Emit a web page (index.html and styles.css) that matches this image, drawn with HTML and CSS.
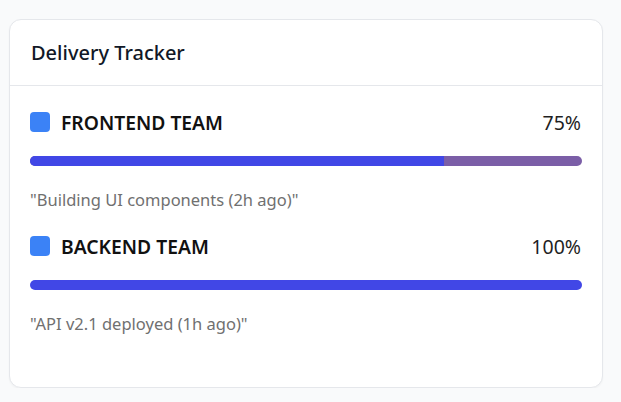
FILE: index.html
```html
<!DOCTYPE html>
<html lang="en">
<head>
<meta charset="utf-8">
<title>Delivery Tracker</title>
<link rel="stylesheet" href="styles.css">
</head>
<body>
<div class="card">
  <div class="card-header">
    <h2 class="title">Delivery Tracker</h2>
  </div>
  <div class="card-body">
    <div class="team">
      <div class="team-row">
        <div class="team-name"><span class="swatch"></span><span>FRONTEND TEAM</span></div>
        <span class="pct">75%</span>
      </div>
      <div class="track"><div class="fill" style="width:75%"></div></div>
      <p class="note">"Building UI components (2h ago)"</p>
    </div>
    <div class="team">
      <div class="team-row">
        <div class="team-name"><span class="swatch"></span><span>BACKEND TEAM</span></div>
        <span class="pct">100%</span>
      </div>
      <div class="track"><div class="fill" style="width:100%"></div></div>
      <p class="note">"API v2.1 deployed (1h ago)"</p>
    </div>
  </div>
</div>
</body>
</html>
```

FILE: styles.css
```css
* { box-sizing: border-box; }
html, body { margin: 0; padding: 0; }
body {
  background: #f9fafb;
  font-family: "Noto Sans", "Open Sans", sans-serif;
  padding: 19px 18px 0 9px;
}
.card {
  width: 594px;
  height: 369px;
  background: #ffffff;
  border: 1px solid #e5e7eb;
  border-radius: 12px;
  box-shadow: 0 1px 2px rgba(0,0,0,0.04);
}
.card-header {
  height: 66px;
  padding: 0 21px;
  display: flex;
  align-items: center;
  border-bottom: 1px solid #e5e7eb;
}
.title {
  margin: 0;
  font-size: 20px;
  font-weight: 500;
  color: #111827;
}
.card-body {
  padding: 21px 20px 0 20px;
  display: flex;
  flex-direction: column;
  gap: 20px;
}
.team-row {
  height: 30px;
  display: flex;
  align-items: center;
  justify-content: space-between;
}
.team-name {
  display: flex;
  align-items: center;
  gap: 11px;
  font-size: 19.3px;
  font-weight: 600;
  color: #111111;
}
.swatch {
  width: 20px;
  height: 20px;
  border-radius: 4px;
  background: #3b82f6;
}
.pct {
  font-size: 19.5px;
  color: #1f1f1f;
  margin-right: 1px;
}
.track {
  margin-top: 19px;
  height: 10px;
  border-radius: 5px;
  background: #7b5ea7;
  overflow: hidden;
}
.fill {
  height: 100%;
  background: #4147e6;
}
.note {
  margin: 23px 0 0 0;
  font-size: 16.5px;
  line-height: 22px;
  color: #707070;
}
```
